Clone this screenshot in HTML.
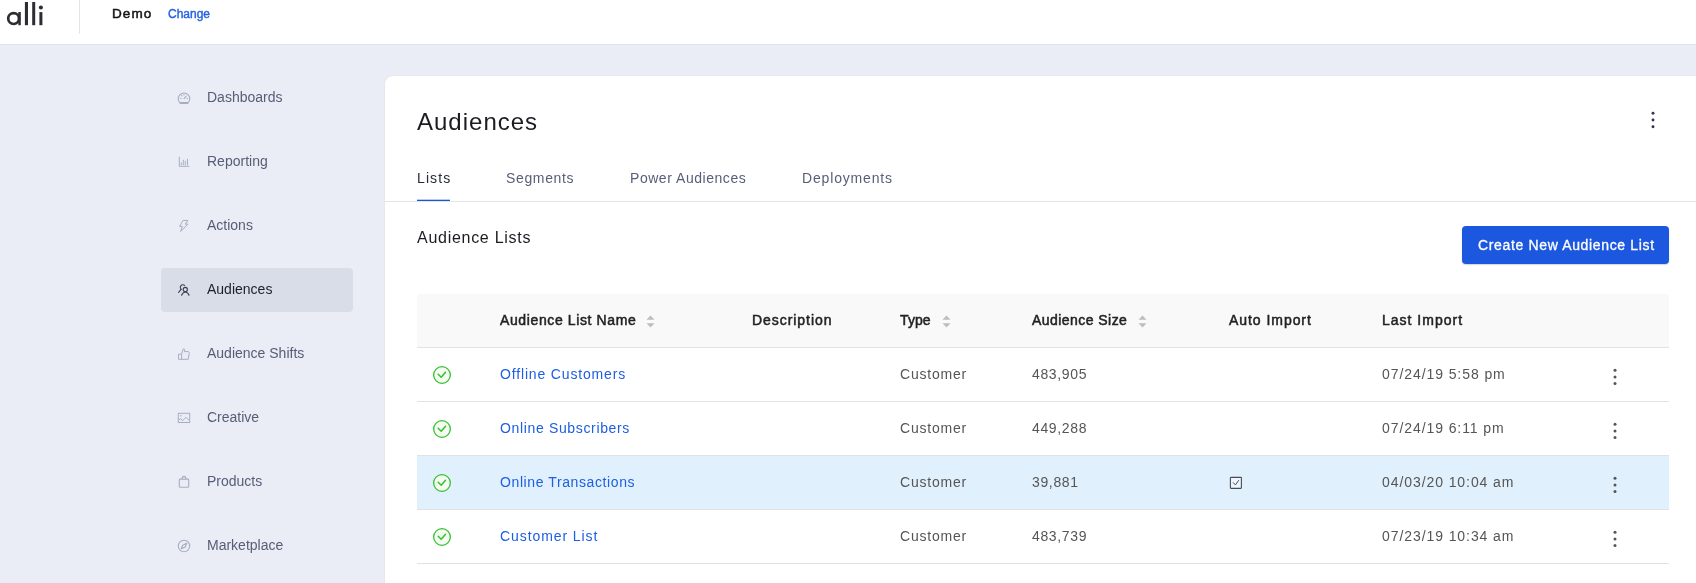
<!DOCTYPE html>
<html><head><meta charset="utf-8">
<style>
*{box-sizing:border-box;margin:0;padding:0}
html,body{width:1696px;height:583px;overflow:hidden;background:#eaedf5;font-family:"Liberation Sans",sans-serif;}
#root{position:absolute;left:0;top:0;width:1696px;height:583px;will-change:transform}
div{white-space:nowrap}
.hdr{position:absolute;left:0;top:0;width:1696px;height:45px;background:#fff;border-bottom:1px solid #dfe2ea;}
.logo{position:absolute;left:0;top:0;width:50px;height:30px}
.vdiv{position:absolute;left:79px;top:0;width:1px;height:34px;background:#e4e4e4}
.demo{position:absolute;left:112px;top:6px;font-size:13.5px;color:#141414;letter-spacing:1.1px;-webkit-text-stroke:0.5px #141414}
.change{position:absolute;left:168px;top:7px;font-size:12px;color:#2563e0;-webkit-text-stroke:0.4px #2563e0}
.nav{position:absolute;left:161px;width:192px;height:44px;border-radius:4px;}
.nav.active{background:#d9dde8}
.nav svg{position:absolute;left:13px;top:12px;width:20px;height:20px}
.nav .tx{position:absolute;left:46px;top:13px;font-size:14px;color:#575d76;}
.nav.active .tx{color:#1d1f2a}
.card{position:absolute;left:385px;top:76px;width:1400px;height:600px;background:#fff;border-radius:8px;box-shadow:0 0 1.5px rgba(40,50,90,.12)}
.title{position:absolute;left:417px;top:108px;font-size:24px;color:#1b1c22;letter-spacing:1px}
.kebab{position:absolute;}
.kebab i{position:absolute;left:0;width:3px;height:3px;border-radius:50%;}
.tab{position:absolute;top:170px;font-size:14px;color:#585e78;}
.tab.active{color:#262a3a}
.tabline{position:absolute;left:417px;top:200px;width:33px;height:1px;background:#1a56db;box-shadow:0 -0.3px 0 #1a56db}
.divider{position:absolute;left:385px;top:201px;width:1311px;height:1px;background:#e5e5e7}
.sub{position:absolute;left:417px;top:229px;font-size:16px;color:#1b1c22;letter-spacing:0.72px}
.btn{position:absolute;left:1462px;top:226px;width:207px;height:38px;background:#1c58df;border-radius:4px;box-shadow:0 1px 1.5px rgba(0,0,0,.18)}
.btn div{position:absolute;left:16px;top:11px;font-size:14px;color:#fff;letter-spacing:0.65px;-webkit-text-stroke:0.3px #fff}
.thead{position:absolute;left:417px;top:294px;width:1252px;height:54px;background:#f9f9f9;border-top-left-radius:2px;border-top-right-radius:2px;border-bottom:1px solid #e2e2e2}
.th{position:absolute;top:312px;font-size:14px;color:#222;-webkit-text-stroke:0.5px #222}
.sort{position:absolute;width:9px;height:13px}
.row{position:absolute;left:417px;width:1252px;height:54px;border-bottom:1px solid #e2e2e2}
.row.hl{background:#e0f0fd}
.td{position:absolute;font-size:14px;color:#555;letter-spacing:0.8px}
.lnk{color:#1d5ee3}
.ck{position:absolute;left:432px;width:20px;height:20px}
.rk{position:absolute;left:1613px;width:4px;height:20px}
.rk i{position:absolute;left:0;width:3px;height:3px;border-radius:50%;background:#555}
</style></head><body><div id="root">
<div class="hdr">
  <svg class="logo" viewBox="0 0 50 30">
    <circle cx="13.6" cy="18.6" r="5.4" fill="none" stroke="#2c2d33" stroke-width="2.7"/>
    <rect x="18.3" y="12" width="2.5" height="13.2" fill="#2c2d33"/>
    <rect x="24.9" y="2" width="3.1" height="23.2" fill="#2c2d33"/>
    <rect x="32.2" y="2" width="3.0" height="23.2" fill="#2c2d33"/>
    <rect x="39.4" y="12.1" width="3.0" height="13.1" fill="#2c2d33"/>
    <circle cx="40.9" cy="7.5" r="2.05" fill="#2c2d33"/>
  </svg>
  <div class="vdiv"></div>
  <div class="demo">Demo</div>
  <div class="change">Change</div>
</div>

<div class="nav" style="top:76px">
  <svg viewBox="0 0 20 20" fill="none" stroke="#a7aec2" stroke-width="1.1" stroke-linecap="round" stroke-linejoin="round">
    <path d="M6.2 15.2 A5.8 5.8 0 1 1 13.8 15.2 Z"/><path d="M6.6 15 H13.4" stroke-width="1.8"/>
    <path d="M10 10.6 L12.2 8.2"/><path d="M6.5 10.5 H7"/><path d="M13 10.5 H13.5"/><path d="M7.6 7.3 L8 7.9"/><path d="M10 6.2 V6.7"/>
  </svg>
  <div class="tx">Dashboards</div></div>
<div class="nav" style="top:140px">
  <svg viewBox="0 0 20 20" fill="none" stroke="#a7aec2" stroke-width="1" stroke-linecap="round">
    <path d="M5.3 5.2 V14.3 H14.8"/><path d="M7.3 10.8 V12.8"/><path d="M9.3 8.3 V12.8"/><path d="M11.3 9.2 V12.8"/><path d="M13.5 7.2 V12.8"/>
  </svg>
  <div class="tx">Reporting</div></div>
<div class="nav" style="top:204px">
  <svg viewBox="0 0 20 20" fill="none" stroke="#a7aec2" stroke-width="1" stroke-linejoin="round">
    <path d="M9 4.4 H13.9 L11.2 8.1 H14 L6.6 15.6 L8.4 10.4 H5.6 Z"/>
  </svg>
  <div class="tx">Actions</div></div>
<div class="nav active" style="top:268px">
  <svg viewBox="0 0 20 20" fill="none" stroke="#3a3e52" stroke-width="1.1" stroke-linecap="round">
    <path d="M10.6 5.4 A1.9 1.9 0 1 0 7.2 9.3"/><path d="M7.1 9.4 L4.6 12.3"/>
    <circle cx="11.3" cy="9.5" r="2.1"/><path d="M7.6 15.3 Q9 12 11.3 12 Q13.8 12 15 15.3"/>
  </svg>
  <div class="tx">Audiences</div></div>
<div class="nav" style="top:332px">
  <svg viewBox="0 0 20 20" fill="none" stroke="#a7aec2" stroke-width="1" stroke-linejoin="round">
    <path d="M4.5 10.2 H7.6 L9.2 5 Q10.3 4.2 10.6 5.6 V7.6 H14.3 Q15.6 8 15.2 9.5 L14.2 15.3 H4.5 Z"/><path d="M7.6 10.2 V15.3"/>
  </svg>
  <div class="tx">Audience Shifts</div></div>
<div class="nav" style="top:396px">
  <svg viewBox="0 0 20 20" fill="none" stroke="#a7aec2" stroke-width="1">
    <rect x="4.3" y="5.3" width="11.4" height="9.2"/><path d="M4.5 12.4 L6.5 10.3 L8.5 12.8 L12 9.2 L15.5 12.8"/><rect x="6.3" y="7.1" width="1.3" height="1.3" fill="#a7aec2" stroke="none"/>
  </svg>
  <div class="tx">Creative</div></div>
<div class="nav" style="top:460px">
  <svg viewBox="0 0 20 20" fill="none" stroke="#a7aec2" stroke-width="1.1">
    <rect x="5.3" y="7.1" width="9.4" height="8.1" rx="0.8"/><path d="M8.1 7.1 Q8.1 4.4 10 4.4 Q11.9 4.4 11.9 7.1"/>
  </svg>
  <div class="tx">Products</div></div>
<div class="nav" style="top:524px">
  <svg viewBox="0 0 20 20" fill="none" stroke="#a7aec2" stroke-width="1.1">
    <circle cx="10" cy="10" r="5.7"/><path d="M7.3 12.7 L8.7 9.2 L12.7 7.3 L11.2 11 Z" fill="none" stroke-width="1.2" stroke-linejoin="round"/>
  </svg>
  <div class="tx">Marketplace</div></div>

<div class="card"></div>
<div class="title">Audiences</div>
<svg style="position:absolute;left:1643px;top:103px;width:20px;height:34px" viewBox="0 0 20 34"><g fill="#2f3350"><circle cx="10" cy="10.2" r="1.45"/><circle cx="10" cy="16.95" r="1.45"/><circle cx="10" cy="23.7" r="1.45"/></g></svg>
<div class="tab active" style="left:417px;letter-spacing:1.1px">Lists</div>
<div class="tab" style="left:506px;letter-spacing:0.64px">Segments</div>
<div class="tab" style="left:630px;letter-spacing:0.54px">Power Audiences</div>
<div class="tab" style="left:802px;letter-spacing:0.84px">Deployments</div>
<div class="tabline"></div>
<div class="divider"></div>
<div class="sub">Audience Lists</div>
<div class="btn"><div>Create New Audience List</div></div>

<div class="thead"></div>
<div class="th" style="left:500px;letter-spacing:0.62px">Audience List Name</div>
<svg class="sort" style="left:646px;top:315px" viewBox="0 0 9 13"><path d="M0.5 4.8 L4.5 0.6 L8.5 4.8 Z M0.5 8.2 L4.5 12.4 L8.5 8.2 Z" fill="#bdbdbd"/></svg>
<div class="th" style="left:752px;letter-spacing:0.95px">Description</div>
<div class="th" style="left:900px;letter-spacing:0.1px">Type</div>
<svg class="sort" style="left:941.5px;top:315px" viewBox="0 0 9 13"><path d="M0.5 4.8 L4.5 0.6 L8.5 4.8 Z M0.5 8.2 L4.5 12.4 L8.5 8.2 Z" fill="#bdbdbd"/></svg>
<div class="th" style="left:1032px;letter-spacing:0.45px">Audience Size</div>
<svg class="sort" style="left:1137.5px;top:315px" viewBox="0 0 9 13"><path d="M0.5 4.8 L4.5 0.6 L8.5 4.8 Z M0.5 8.2 L4.5 12.4 L8.5 8.2 Z" fill="#bdbdbd"/></svg>
<div class="th" style="left:1229px;letter-spacing:0.95px">Auto Import</div>
<div class="th" style="left:1382px;letter-spacing:1.0px">Last Import</div>

<div class="row" style="top:348px"></div>
<div class="row" style="top:402px"></div>
<div class="row hl" style="top:456px"></div>
<div class="row" style="top:510px"></div>

<!-- row 1 -->
<svg class="ck" style="top:365px" viewBox="0 0 20 20"><circle cx="10" cy="10" r="8.35" fill="#f3fcee" stroke="#35bf35" stroke-width="1.3"/><path d="M6.2 9.3 L9.2 12.3 L13.5 7.2" fill="none" stroke="#35bf35" stroke-width="1.5" stroke-linecap="round" stroke-linejoin="round"/></svg>
<div class="td lnk" style="left:500px;top:366px;letter-spacing:0.84px">Offline Customers</div>
<div class="td" style="left:900px;top:366px">Customer</div>
<div class="td" style="left:1032px;top:366px;letter-spacing:0.65px">483,905</div>
<div class="td" style="left:1382px;top:366px;letter-spacing:0.92px">07/24/19 5:58 pm</div>
<svg style="position:absolute;left:1605px;top:360px;width:20px;height:34px" viewBox="0 0 20 34"><g fill="#555"><circle cx="10" cy="10.3" r="1.5"/><circle cx="10" cy="16.9" r="1.5"/><circle cx="10" cy="23.5" r="1.5"/></g></svg>

<!-- row 2 -->
<svg class="ck" style="top:419px" viewBox="0 0 20 20"><circle cx="10" cy="10" r="8.35" fill="#f3fcee" stroke="#35bf35" stroke-width="1.3"/><path d="M6.2 9.3 L9.2 12.3 L13.5 7.2" fill="none" stroke="#35bf35" stroke-width="1.5" stroke-linecap="round" stroke-linejoin="round"/></svg>
<div class="td lnk" style="left:500px;top:420px;letter-spacing:0.65px">Online Subscribers</div>
<div class="td" style="left:900px;top:420px">Customer</div>
<div class="td" style="left:1032px;top:420px;letter-spacing:0.65px">449,288</div>
<div class="td" style="left:1382px;top:420px;letter-spacing:0.92px">07/24/19 6:11 pm</div>
<svg style="position:absolute;left:1605px;top:414px;width:20px;height:34px" viewBox="0 0 20 34"><g fill="#555"><circle cx="10" cy="10.3" r="1.5"/><circle cx="10" cy="16.9" r="1.5"/><circle cx="10" cy="23.5" r="1.5"/></g></svg>

<!-- row 3 -->
<svg class="ck" style="top:473px" viewBox="0 0 20 20"><circle cx="10" cy="10" r="8.35" fill="#f3fcee" stroke="#35bf35" stroke-width="1.3"/><path d="M6.2 9.3 L9.2 12.3 L13.5 7.2" fill="none" stroke="#35bf35" stroke-width="1.5" stroke-linecap="round" stroke-linejoin="round"/></svg>
<div class="td lnk" style="left:500px;top:474px;letter-spacing:0.6px">Online Transactions</div>
<div class="td" style="left:900px;top:474px">Customer</div>
<div class="td" style="left:1032px;top:474px;letter-spacing:0.65px">39,881</div>
<svg style="position:absolute;left:1229px;top:476px;width:14px;height:14px" viewBox="0 0 14 14"><rect x="1.4" y="1.4" width="11" height="11" rx="0.6" fill="#eef6fd" stroke="#4a4d55" stroke-width="1.1"/><path d="M4 6.4 L6.4 8.9 L9.8 4.2" fill="none" stroke="#4a4d55" stroke-width="1"/></svg>
<div class="td" style="left:1382px;top:474px;letter-spacing:0.92px">04/03/20 10:04 am</div>
<svg style="position:absolute;left:1605px;top:468px;width:20px;height:34px" viewBox="0 0 20 34"><g fill="#555"><circle cx="10" cy="10.3" r="1.5"/><circle cx="10" cy="16.9" r="1.5"/><circle cx="10" cy="23.5" r="1.5"/></g></svg>

<!-- row 4 -->
<svg class="ck" style="top:527px" viewBox="0 0 20 20"><circle cx="10" cy="10" r="8.35" fill="#f3fcee" stroke="#35bf35" stroke-width="1.3"/><path d="M6.2 9.3 L9.2 12.3 L13.5 7.2" fill="none" stroke="#35bf35" stroke-width="1.5" stroke-linecap="round" stroke-linejoin="round"/></svg>
<div class="td lnk" style="left:500px;top:528px;letter-spacing:0.92px">Customer List</div>
<div class="td" style="left:900px;top:528px">Customer</div>
<div class="td" style="left:1032px;top:528px;letter-spacing:0.65px">483,739</div>
<div class="td" style="left:1382px;top:528px;letter-spacing:0.92px">07/23/19 10:34 am</div>
<svg style="position:absolute;left:1605px;top:522px;width:20px;height:34px" viewBox="0 0 20 34"><g fill="#555"><circle cx="10" cy="10.3" r="1.5"/><circle cx="10" cy="16.9" r="1.5"/><circle cx="10" cy="23.5" r="1.5"/></g></svg>

</div></body></html>
